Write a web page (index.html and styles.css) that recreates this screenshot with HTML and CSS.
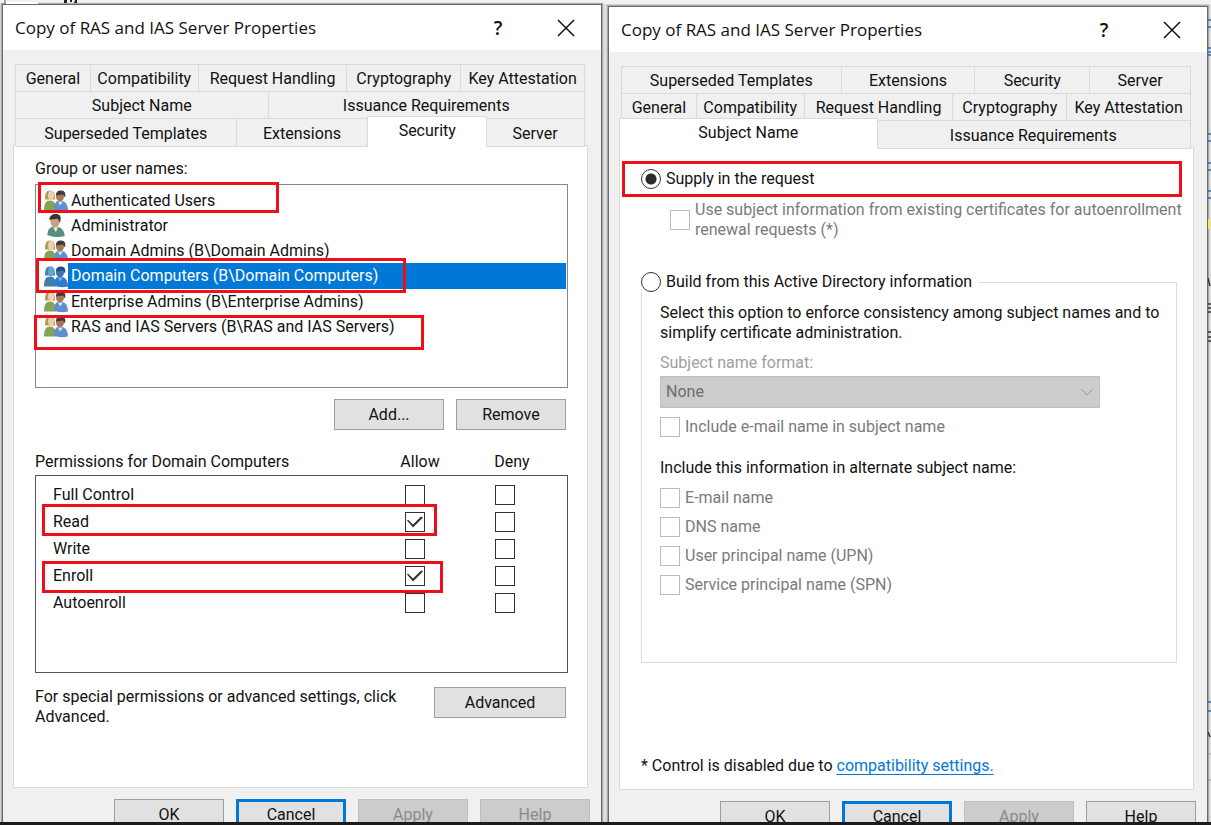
FILE: index.html
```html
<!DOCTYPE html>
<html lang="en">
<head>
    <meta charset="UTF-8">
    <meta name="viewport" content="width=device-width, initial-scale=1.0">
    <title>Copy of RAS and IAS Server Properties</title>
    <link rel="stylesheet" href="styles.css">
</head>
<body>

<!-- shared user icons -->
<svg class="sprites" aria-hidden="true">
    <symbol id="group" viewBox="0 0 24 22">
        <path d="M0 21c0-7 2-10 6-10s6 3 6 10z" fill="#86a354"/>
        <path d="M1 10c0-6 1-9 5-9s5 3 5 9z" fill="#b39a5c"/>
        <ellipse cx="7" cy="6" rx="3" ry="5" fill="#ecd0b0"/>
        <path d="M10 20c0-6 2-9 6-9 5 0 8 4 8 10-4 1-10 1-14-1z" fill="#5f8fce"/>
        <path d="M14 12l2 4 3-4z" fill="#dbe8f5"/>
        <ellipse cx="16" cy="7" rx="4" ry="5" fill="#a87955"/>
        <path d="M12 6c0-4 2-5 5-5 4 0 5 3 4 7l-2-3z" fill="#3f3b3b"/>
    </symbol>
    <symbol id="group-selected" viewBox="0 0 24 22">
        <path d="M0 21c0-7 2-10 6-10s6 3 6 10z" fill="#3c7fa8"/>
        <path d="M1 10c0-6 1-9 5-9s5 3 5 9z" fill="#3f83b4"/>
        <ellipse cx="7" cy="6" rx="3" ry="5" fill="#6aa4d4"/>
        <path d="M10 20c0-6 2-9 6-9 5 0 8 4 8 10-4 1-10 1-14-1z" fill="#2f7bd0"/>
        <path d="M14 12l2 4 3-4z" fill="#78b4ea"/>
        <ellipse cx="16" cy="7" rx="4" ry="5" fill="#3d74ab"/>
        <path d="M12 6c0-4 2-5 5-5 4 0 5 3 4 7l-2-3z" fill="#1b4f87"/>
    </symbol>
    <symbol id="user" viewBox="0 0 24 24">
        <path d="M3 22c0-6 3-9 8-9 6 0 10 4 10 10-6 2-13 1-18-1z" fill="#5a8f7e"/>
        <path d="M9 14l3 5 2-6z" fill="#e4efe9"/>
        <ellipse cx="11" cy="7" rx="5" ry="7" fill="#c9a17c"/>
        <path d="M5 6c0-4 3-6 7-6 5 0 6 4 4 9l-2-4z" fill="#3a3434"/>
    </symbol>
</svg>

<div class="desktop">

    <section class="dialog">
        <header class="titlebar">
            <h1>Copy of RAS and IAS Server Properties</h1>
            <button class="caption help-btn" aria-label="Context help">?</button>
            <button class="caption" aria-label="Close">
                <svg width="18" height="18" viewBox="0 0 18 18"><path d="M1 1l16 16M17 1L1 17" stroke="#111" stroke-width="1.5"/></svg>
            </button>
        </header>

        <div class="dialog-body">
            <nav class="tabs">
                <div class="tab-row cols-general">
                    <button>General</button>
                    <button>Compatibility</button>
                    <button>Request Handling</button>
                    <button>Cryptography</button>
                    <button>Key Attestation</button>
                </div>
                <div class="tab-row cols-subject">
                    <button>Subject Name</button>
                    <button>Issuance Requirements</button>
                </div>
                <div class="tab-row cols-security">
                    <button>Superseded Templates</button>
                    <button>Extensions</button>
                    <button class="active">Security</button>
                    <button>Server</button>
                </div>
            </nav>

            <div class="panel security">
                <p>Group or user names:</p>
                <ul class="user-list">
                    <li><svg><use href="#group"/></svg><span>Authenticated Users</span><i class="mark mark-auth"></i></li>
                    <li><svg><use href="#user"/></svg><span>Administrator</span></li>
                    <li><svg><use href="#group"/></svg><span>Domain Admins (B\Domain Admins)</span></li>
                    <li class="selected"><svg><use href="#group-selected"/></svg><span>Domain Computers (B\Domain Computers)</span><i class="mark mark-computers"></i></li>
                    <li><svg><use href="#group"/></svg><span>Enterprise Admins (B\Enterprise Admins)</span></li>
                    <li><svg><use href="#group"/></svg><span>RAS and IAS Servers (B\RAS and IAS Servers)</span><i class="mark mark-ras"></i></li>
                </ul>
                <div class="list-actions">
                    <button class="btn">Add...</button>
                    <button class="btn">Remove</button>
                </div>

                <div class="perm-head">
                    <span class="perm-title">Permissions for Domain Computers</span>
                    <span>Allow</span>
                    <span>Deny</span>
                </div>
                <div class="perm-box">
                    <table>
                        <tr>
                            <th scope="row">Full Control</th>
                            <td><input type="checkbox" aria-label="Allow Full Control"></td>
                            <td><input type="checkbox" aria-label="Deny Full Control"></td>
                        </tr>
                        <tr>
                            <th scope="row">Read<i class="mark mark-read"></i></th>
                            <td><input type="checkbox" aria-label="Allow Read" checked></td>
                            <td><input type="checkbox" aria-label="Deny Read"></td>
                        </tr>
                        <tr>
                            <th scope="row">Write</th>
                            <td><input type="checkbox" aria-label="Allow Write"></td>
                            <td><input type="checkbox" aria-label="Deny Write"></td>
                        </tr>
                        <tr>
                            <th scope="row">Enroll<i class="mark mark-enroll"></i></th>
                            <td><input type="checkbox" aria-label="Allow Enroll" checked></td>
                            <td><input type="checkbox" aria-label="Deny Enroll"></td>
                        </tr>
                        <tr>
                            <th scope="row">Autoenroll</th>
                            <td><input type="checkbox" aria-label="Allow Autoenroll"></td>
                            <td><input type="checkbox" aria-label="Deny Autoenroll"></td>
                        </tr>
                    </table>
                </div>

                <div class="advanced">
                    <p>For special permissions or advanced settings, click Advanced.</p>
                    <button class="btn wide">Advanced</button>
                </div>
            </div>
        </div>

        <footer class="dialog-buttons">
            <button class="btn">OK</button>
            <button class="btn default">Cancel</button>
            <button class="btn" disabled>Apply</button>
            <button class="btn" disabled>Help</button>
        </footer>
    </section>

    <section class="dialog second">
        <header class="titlebar">
            <h1>Copy of RAS and IAS Server Properties</h1>
            <button class="caption help-btn" aria-label="Context help">?</button>
            <button class="caption" aria-label="Close">
                <svg width="18" height="18" viewBox="0 0 18 18"><path d="M1 1l16 16M17 1L1 17" stroke="#111" stroke-width="1.5"/></svg>
            </button>
        </header>

        <div class="dialog-body">
            <nav class="tabs">
                <div class="tab-row cols-templates">
                    <button>Superseded Templates</button>
                    <button>Extensions</button>
                    <button>Security</button>
                    <button>Server</button>
                </div>
                <div class="tab-row cols-general">
                    <button>General</button>
                    <button>Compatibility</button>
                    <button>Request Handling</button>
                    <button>Cryptography</button>
                    <button>Key Attestation</button>
                </div>
                <div class="tab-row cols-subject">
                    <button class="active first">Subject Name</button>
                    <button>Issuance Requirements</button>
                </div>
            </nav>

            <div class="panel subject">
                <div class="supply">
                    <label class="option"><input type="radio" name="source" checked>Supply in the request</label>
                    <i class="mark mark-supply"></i>
                </div>
                <label class="option disabled reuse">
                    <input type="checkbox" disabled>
                    <span>Use subject information from existing certificates for autoenrollment renewal requests (*)</span>
                </label>

                <fieldset>
                    <legend><label class="option"><input type="radio" name="source">Build from this Active Directory information</label></legend>
                    <p>Select this option to enforce consistency among subject names and to simplify certificate administration.</p>
                    <label class="format-label" for="format">Subject name format:</label>
                    <div class="select-wrap">
                        <select id="format" disabled>
                            <option>None</option>
                        </select>
                        <svg width="12" height="8" viewBox="0 0 12 8"><path d="M0 1l6 6 6-6" fill="none" stroke="#999"/></svg>
                    </div>
                    <label class="option disabled"><input type="checkbox" disabled>Include e-mail name in subject name</label>
                    <p class="alt-label">Include this information in alternate subject name:</p>
                    <div class="alt-names">
                        <label class="option disabled"><input type="checkbox" disabled>E-mail name</label>
                        <label class="option disabled"><input type="checkbox" disabled>DNS name</label>
                        <label class="option disabled"><input type="checkbox" disabled>User principal name (UPN)</label>
                        <label class="option disabled"><input type="checkbox" disabled>Service principal name (SPN)</label>
                    </div>
                </fieldset>

                <p class="footnote">* Control is disabled due to <a href="#">compatibility settings.</a></p>
            </div>
        </div>

        <footer class="dialog-buttons">
            <button class="btn">OK</button>
            <button class="btn default">Cancel</button>
            <button class="btn" disabled>Apply</button>
            <button class="btn">Help</button>
        </footer>
    </section>

    <!-- slivers of the window behind the dialogs -->
    <svg class="behind-top" width="90" height="4" aria-hidden="true">
        <path d="M5 0v4" stroke="#555"/>
        <path d="M6 2h32v2h-32z" fill="#fff"/>
        <path d="M64 0h3v3h-3zM70 0h2v2h-2zM75 0h2v3h-3z" fill="#222"/>
    </svg>
    <svg class="behind-right" width="3" height="820" aria-hidden="true">
        <path d="M0 20h3M0 27h3M0 48h3M0 52h3M0 55h3M0 134h3M0 141h3M0 163h3M0 170h3M0 191h3M0 198h3M0 702h3M0 711h3" stroke="#2a6fb5" stroke-width="1.5"/>
        <path d="M0 219h3v10h-3z" fill="#f3e37a"/>
        <path d="M0 278l2 8M0 304h3M0 308h3M0 312h3M0 332h3M0 337h3M0 341h3M0 732l2 5" stroke="#333" stroke-width="1.5"/>
        <path d="M0 754h3M0 780h3" stroke="#999"/>
    </svg>
</div>

<div class="taskbar"></div>

</body>
</html>
```

FILE: styles.css
```css
* {
    box-sizing: border-box;
}
body {
    margin: 0;
    height: 100vh;
    display: flex;
    flex-direction: column;
    overflow: hidden;
    background-color: #dedede;
    color: #111;
    font-family: Roboto, "Liberation Sans", sans-serif;
    font-size: 16px;
    line-height: 20px;
}
p, ul, h1 {
    margin: 0;
    padding: 0;
}
button, input, select {
    font: inherit;
    color: inherit;
    margin: 0;
}
.sprites {
    display: none;
}
.desktop {
    position: relative;
    flex: 1;
    min-height: 0;
    overflow: hidden;
    display: flex;
    align-items: flex-start;
    gap: 6px;
    padding: 4px 3px 0 2px;
    background: linear-gradient(#f2f2f2 4px, #dedede 4px);
}
.taskbar {
    height: 3px;
    background-color: #1c1c1c;
}
.behind-top {
    position: absolute;
    top: 0;
    left: 0;
}
.behind-right {
    position: absolute;
    top: 0;
    right: 0;
}

/* dialog frame */
.dialog {
    flex: 1;
    min-width: 0;
    background-color: #f0f0f0;
    border: 1px solid #6a6a6a;
    box-shadow: 0 0 1px 1px #a8a8a8;
}
.second {
    margin-top: 2px;
}
.titlebar {
    display: flex;
    align-items: center;
    height: 45px;
    padding: 0 16px 0 12px;
    background-color: #fff;
}
.titlebar h1 {
    flex: 1;
    font-family: "Open Sans", "Noto Sans", sans-serif;
    font-size: 17px;
    font-weight: normal;
}
.caption {
    display: flex;
    justify-content: center;
    align-items: center;
    width: 38px;
    height: 38px;
    padding: 0;
    border: none;
    background: none;
}
.help-btn {
    margin-right: 30px;
    font-family: "Open Sans", sans-serif;
    font-size: 19px;
    font-weight: 600;
}
.dialog-body {
    padding: 14px 13px 0 10px;
}
.dialog-buttons {
    display: flex;
    justify-content: flex-end;
    gap: 12px;
    padding: 11px;
}

/* tabs */
.tabs {
    margin: 0 3px 0 2px;
    border-top: 1px solid #dadada;
    border-left: 1px solid #dadada;
}
.tab-row {
    display: grid;
    height: 27px;
}
.cols-general {
    grid-template-columns: 75fr 108fr 149fr 114fr 124fr;
}
.cols-subject {
    grid-template-columns: 253fr 317fr;
}
.second .cols-subject {
    grid-template-columns: 255fr 315fr;
}
.cols-security {
    grid-template-columns: 221fr 132fr 118fr 99fr;
}
.cols-templates {
    grid-template-columns: 220fr 134fr 115fr 101fr;
}
.tab-row button {
    padding: 2px 0 0;
    border: 1px solid #dadada;
    border-width: 0 1px 1px 0;
    background-color: #f0f0f0;
    white-space: nowrap;
}
.tab-row .active {
    position: relative;
    height: 31px;
    margin: -3px -1px 0;
    padding: 0 0 3px;
    border-width: 1px 1px 0 1px;
    background-color: #fff;
}
.tab-row .first {
    margin-left: -3px;
}
.panel {
    height: 643px;
    margin-top: -1px;
    border: 1px solid #dadada;
    background-color: #fff;
}
.panel.security {
    padding: 13px 19px 0 21px;
}
.panel.subject {
    padding: 21px 16px 0 21px;
}

/* buttons */
.btn {
    width: 110px;
    height: 31px;
    padding: 0;
    border: 1px solid #9e9e9e;
    background-color: #e1e1e1;
}
.btn.wide {
    width: 132px;
}
.btn.default {
    border: 3px solid #0078d7;
}
.btn:disabled {
    border-color: #bfbfbf;
    background-color: #cccccc;
    color: #8a8a8a;
}

/* user list */
.user-list {
    height: 204px;
    margin-top: 5px;
    padding: 3px 1px 0 8px;
    border: 1px solid #828790;
    list-style: none;
}
.user-list li {
    position: relative;
    display: flex;
    align-items: center;
    height: 25px;
}
.user-list svg {
    flex: none;
    width: 24px;
    height: 23px;
}
.user-list span {
    flex: 1;
    align-self: stretch;
    padding-left: 3px;
    line-height: 25px;
}
.user-list li.selected {
    height: 26px;
}
.user-list .selected span {
    background-color: #0078d7;
    color: #fff;
    line-height: 26px;
}
.list-actions {
    display: flex;
    justify-content: flex-end;
    gap: 12px;
    margin-top: 11px;
    padding-right: 2px;
}

/* permissions */
.perm-head {
    display: flex;
    margin-top: 22px;
    padding-right: 10px;
}
.perm-head span {
    width: 92px;
    text-align: center;
}
.perm-head .perm-title {
    flex: 1;
    text-align: left;
}
.perm-box {
    height: 198px;
    margin-top: 3px;
    padding: 5px 17px 0 17px;
    border: 1px solid #555;
}
table {
    width: 100%;
    border-collapse: collapse;
}
tr {
    height: 27px;
}
th {
    position: relative;
    padding: 0;
    font-weight: normal;
    text-align: left;
}
td {
    width: 90px;
    padding: 0;
    text-align: center;
}
input[type="checkbox"] {
    appearance: none;
    position: relative;
    flex: none;
    width: 20px;
    height: 20px;
    border: 1px solid #333;
    background-color: #fff;
    vertical-align: top;
}
/* tick drawn as a clipped block */
input[type="checkbox"]:checked::after {
    content: "";
    position: absolute;
    inset: 0;
    background-color: #333;
    clip-path: polygon(1px 8px, 2px 7px, 7px 12px, 15px 4px, 17px 5px, 7px 15px);
}
input[type="checkbox"]:disabled {
    border-color: #bdbdbd;
}
input[type="radio"] {
    appearance: none;
    flex: none;
    width: 20px;
    height: 20px;
    border: 1px solid #333;
    border-radius: 50%;
    background-color: #fff;
}
input[type="radio"]:checked {
    background: radial-gradient(circle, #2b2b2b 5px, #fff 6px);
}
.advanced {
    display: flex;
    justify-content: space-between;
    margin-top: 14px;
    padding-right: 2px;
}
.advanced p {
    width: 370px;
}

/* subject name */
.option {
    display: flex;
    align-items: center;
    gap: 5px;
}
.option.disabled {
    color: #7a7a7a;
}
.supply {
    position: relative;
}
.reuse {
    margin: 11px -12px 0 29px;
}
fieldset {
    position: relative;
    height: 391px;
    min-width: 0;
    margin: 32px 0 0;
    padding: 11px 8px 0 18px;
    border: 1px solid #dcdcdc;
}
legend {
    margin-left: -19px;
    padding: 0 6px 0 0;
    background-color: #fff;
}
.format-label {
    display: block;
    margin-top: 10px;
    color: #a0a0a0;
}
.select-wrap {
    position: relative;
    width: 440px;
    margin: 3px 0 9px;
}
.select-wrap select {
    display: block;
    appearance: none;
    width: 100%;
    height: 32px;
    padding: 0 5px;
    border: 1px solid #bfbfbf;
    border-radius: 0;
    background-color: #cccccc;
    color: #6d6d6d;
    opacity: 1;
}
.select-wrap svg {
    position: absolute;
    right: 7px;
    top: 12px;
}
.alt-label {
    margin: 21px 0 10px;
}
.alt-names {
    display: flex;
    flex-direction: column;
    gap: 9px;
}
.footnote {
    margin-top: 93px;
}
a {
    color: #0078d7;
    text-underline-offset: 3px;
}

/* red highlight frames */
.mark {
    position: absolute;
    border: 3px solid #ed1018;
    pointer-events: none;
}
.mark-auth {
    left: -6px;
    top: -6px;
    width: 241px;
    height: 31px;
}
.mark-computers {
    left: -8px;
    top: -5px;
    width: 370px;
    height: 35px;
    z-index: 1;
}
.mark-ras {
    left: -10px;
    top: 1px;
    width: 390px;
    height: 35px;
}
.mark-read {
    left: -11px;
    top: -4px;
    width: 395px;
    height: 32px;
}
.mark-enroll {
    left: -11px;
    top: -1px;
    width: 401px;
    height: 32px;
}
.mark-supply {
    left: -19px;
    right: -5px;
    top: -8px;
    height: 36px;
}
```
